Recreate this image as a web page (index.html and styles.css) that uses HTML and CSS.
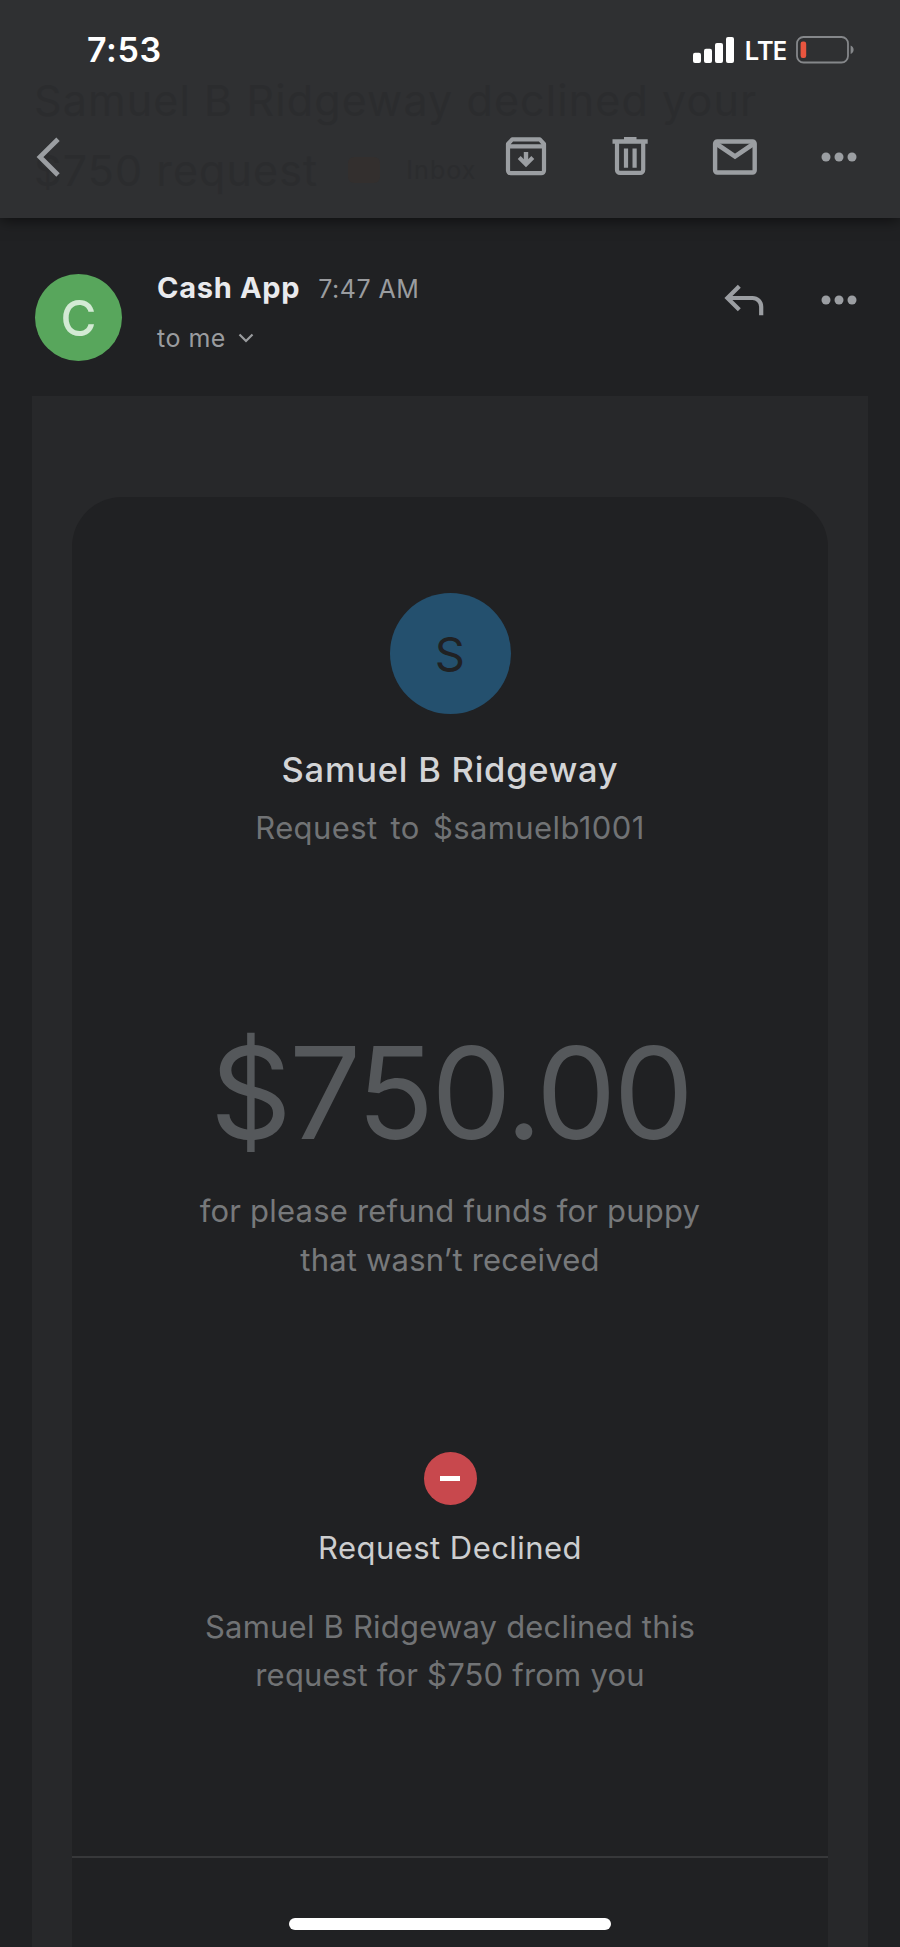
FILE: index.html
```html
<!DOCTYPE html>
<html lang="en">
<head>
    <meta charset="UTF-8">
    <meta name="viewport" content="width=device-width, initial-scale=1.0">
    <title>Cash App</title>
    <link rel="stylesheet" href="styles.css">
</head>
<body>

<header class="top-bar">
    <div class="subject">
        <p class="subject-line">Samuel B Ridgeway declined your</p>
        <p class="subject-line">$750 request <span class="marker"></span><span class="folder">Inbox</span></p>
    </div>
    <div class="status-bar">
        <span class="clock">7:53</span>
        <div class="status-icons">
            <svg class="signal" width="41" height="26" viewBox="0 0 41 26" fill="#fff">
                <rect x="0" y="15.7" width="8" height="10.3" rx="2"/>
                <rect x="11" y="11.7" width="8" height="14.3" rx="2"/>
                <rect x="22" y="6" width="8" height="20" rx="2"/>
                <rect x="33" y="0" width="8" height="26" rx="2"/>
            </svg>
            <span class="network">LTE</span>
            <svg class="battery" width="59" height="28" viewBox="0 0 59 28">
                <rect x="1" y="1" width="51" height="25.5" rx="6.5" fill="none" stroke="#85878a" stroke-width="1.8"/>
                <path d="M54.6 9.5c4 1.5 4 7 0 8.5z" fill="#85878a"/>
                <rect x="4.6" y="5.5" width="5.6" height="16.5" rx="2.2" fill="#e9553f"/>
            </svg>
        </div>
    </div>
    <nav class="toolbar">
        <svg class="icon" viewBox="0 0 48 48"><path d="M34 6.2L16 24l18 18" fill="none" stroke="#9b9ea2" stroke-width="4.8"/></svg>
        <div class="actions">
            <svg class="icon" viewBox="0 0 48 48" fill="none" stroke="#9b9ea2">
                <path d="M6 14V37.5a2.7 2.7 0 0 0 2.7 2.7h30.6a2.7 2.7 0 0 0 2.7-2.7V11l-4.2-4.6H10.2L6 11zM6 13.3h36" stroke-width="4.2" stroke-linejoin="round"/>
                <path d="M24 19v11" stroke-width="4.4"/>
                <path d="M17.2 24.6L24 31.2l6.8-6.6" stroke-width="4.2"/>
            </svg>
            <svg class="icon" viewBox="0 0 48 48" fill="none" stroke="#9b9ea2">
                <path d="M11 10v26.8a3 3 0 0 0 3 3.1h20.2a3 3 0 0 0 3-3.1V10" stroke-width="4.2"/>
                <path d="M6.5 8.5h35.2M18 6.4h12.5" stroke-width="4.6"/>
                <path d="M20 15.5v19.3M28.6 15.5v19.3" stroke-width="4.2"/>
            </svg>
            <svg class="icon" viewBox="0 0 48 48" fill="none" stroke="#9b9ea2">
                <rect x="4.1" y="8.5" width="39.6" height="31" rx="2.2" stroke-width="4.4"/>
                <path d="M5 10.5L24 23.5l19-13" stroke-width="4.6"/>
            </svg>
            <svg class="icon" viewBox="0 0 48 48" fill="#9b9ea2"><circle cx="11" cy="24" r="4.5"/><circle cx="24" cy="24" r="4.5"/><circle cx="37" cy="24" r="4.5"/></svg>
        </div>
    </nav>
</header>

<section class="message-header">
    <div class="avatar">C</div>
    <div class="sender">
        <div class="sender-row"><span class="sender-name">Cash App</span><span class="time">7:47 AM</span></div>
        <div class="to-row">
            <span>to me</span>
            <svg width="16" height="10" viewBox="0 0 16 10"><path d="M1.5 1.5L8 8l6.5-6.5" fill="none" stroke="#9a9c9f" stroke-width="2.2"/></svg>
        </div>
    </div>
    <div class="actions message-actions">
        <svg class="icon" viewBox="0 0 48 48" fill="none" stroke="#9b9ea2" stroke-width="4.2">
            <path d="M19.3 10.2L7.4 22l11.9 11.8"/>
            <path d="M8 22h24.5a8.7 8.7 0 0 1 8.7 8.7V39.3"/>
        </svg>
        <svg class="icon" viewBox="0 0 48 48" fill="#9b9ea2"><circle cx="11" cy="24" r="4.5"/><circle cx="24" cy="24" r="4.5"/><circle cx="37" cy="24" r="4.5"/></svg>
    </div>
</section>

<main class="email">
    <div class="card">
        <div class="initial">S</div>
        <h1 class="name">Samuel B Ridgeway</h1>
        <p class="handle">Request to $samuelb1001</p>
        <p class="amount">$750.00</p>
        <p class="note">for please refund funds for puppy<br>that wasn’t received</p>
        <div class="declined-badge"><span class="dash"></span></div>
        <h2 class="status">Request Declined</h2>
        <p class="detail">Samuel B Ridgeway declined this<br>request for $750 from you</p>
        <hr class="divider">
    </div>
</main>

<div class="home-indicator"></div>

</body>
</html>
```
FILE: styles.css
```css
* {
    box-sizing: border-box;
}
body {
    margin: 0;
    height: 1947px;
    overflow: hidden;
    display: flex;
    flex-direction: column;
    position: relative;
    background-color: #202123;
    color: #9a9c9f;
    font-family: Inter, "Liberation Sans", sans-serif;
}
p, h1, h2 {
    margin: 0;
    font-weight: 400;
}
svg {
    display: block;
}

/* status bar and toolbar */
.top-bar {
    position: relative;
    flex: none;
    height: 218px;
    background-color: #2f3032;
    box-shadow: 0 2px 14px rgba(0, 0, 0, 0.6);
}
.subject {
    position: absolute;
    top: 65px;
    left: 34px;
    color: #2b2c2e;
    font-size: 43px;
    letter-spacing: 1.1px;
    line-height: 70px;
    white-space: nowrap;
}
.subject-line {
    display: flex;
    align-items: center;
}
.marker {
    width: 32px;
    height: 26px;
    margin-left: 30px;
    border-radius: 6px;
    background-color: #332f2e;
}
.folder {
    margin-left: 26px;
    font-size: 25px;
}
.status-bar {
    position: relative;
    display: flex;
    justify-content: space-between;
    align-items: center;
    height: 96px;
    padding: 3px 45px 0 87px;
}
.clock {
    color: #fff;
    font-size: 34px;
    font-weight: 600;
    letter-spacing: 0.6px;
    line-height: 40px;
}
.status-icons {
    display: flex;
    align-items: center;
}
.network {
    width: 62px;
    color: #fff;
    font-family: "Open Sans", "Noto Sans", sans-serif;
    font-size: 27.5px;
    font-weight: 600;
    letter-spacing: -1.2px;
    line-height: 30px;
    text-align: center;
}
.toolbar {
    position: relative;
    display: flex;
    justify-content: space-between;
    align-items: center;
    height: 121px;
    padding: 0 37px 0 24px;
}
.icon {
    width: 48px;
    height: 48px;
}
.actions {
    display: flex;
    gap: 56.4px;
}

/* sender row */
.message-header {
    display: flex;
    flex: none;
    height: 178px;
    padding: 50px 37px 0 35px;
}
.avatar {
    width: 87px;
    height: 87px;
    margin-top: 6px;
    border-radius: 50%;
    background-color: #58a65c;
    color: #d3ead4;
    font-size: 49px;
    font-weight: 500;
    line-height: 89px;
    text-align: center;
}
.sender {
    flex: 1;
    margin-left: 35px;
}
.sender-row {
    display: flex;
    align-items: baseline;
    line-height: 40px;
}
.sender-name {
    color: #e9eaed;
    font-size: 29px;
    font-weight: 700;
    letter-spacing: 0.7px;
}
.time {
    margin-left: 18px;
    font-size: 25px;
    letter-spacing: 0.5px;
}
.to-row {
    display: flex;
    align-items: center;
    gap: 12px;
    margin-top: 11px;
    font-size: 25px;
    letter-spacing: 0.5px;
    line-height: 36px;
}
.message-actions {
    gap: 47.5px;
    margin-top: 8px;
}

/* email body */
.email {
    flex: 1;
    margin: 0 32px;
    padding: 101px 40px 0;
    background-color: #27282a;
}
.card {
    display: flex;
    flex-direction: column;
    align-items: center;
    height: 100%;
    padding-top: 96px;
    border-radius: 50px 50px 0 0;
    background-color: #202123;
    color: #717375;
    font-size: 31px;
    letter-spacing: 0.2px;
    line-height: 48.4px;
    text-align: center;
}
.initial {
    width: 121px;
    height: 121px;
    border-radius: 50%;
    background-color: #24506e;
    color: #202123;
    font-size: 47px;
    line-height: 121px;
}
.name {
    margin-top: 34px;
    color: #d3d4d6;
    font-size: 34.5px;
    font-weight: 500;
    letter-spacing: 0.75px;
    line-height: 44px;
}
.handle {
    margin-top: 12px;
    letter-spacing: 0.4px;
    word-spacing: 4px;
}
.amount {
    margin: 171px 0 0 1px;
    color: #55585b;
    font-size: 127.5px;
    letter-spacing: -3px;
    line-height: 140px;
}
.note {
    margin-top: 24px;
    color: #77797b;
}
.declined-badge {
    display: flex;
    justify-content: center;
    align-items: center;
    width: 53px;
    height: 53px;
    margin-top: 168px;
    border-radius: 50%;
    background-color: #c8484d;
}
.dash {
    width: 20px;
    height: 5px;
    background-color: #fff;
}
.status {
    margin-top: 19px;
    color: #cdcecf;
    font-size: 31px;
    letter-spacing: 0.45px;
}
.detail {
    margin-top: 30px;
}
.divider {
    align-self: stretch;
    height: 2px;
    margin: 157px 0 0;
    border: none;
    background-color: #37383a;
}

.home-indicator {
    position: absolute;
    left: 289px;
    bottom: 17px;
    width: 322px;
    height: 12px;
    border-radius: 6px;
    background-color: #fff;
}
```
